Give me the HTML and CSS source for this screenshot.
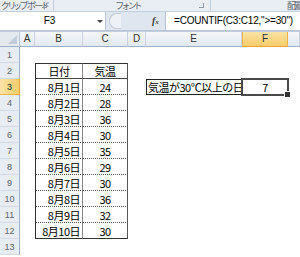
FILE: index.html
```html
<!DOCTYPE html>
<html lang="ja">
<head>
  <meta charset="UTF-8"/>
  <title>COUNTIF</title>
  <link rel="stylesheet" href="styles.css">
</head>
<body>
  <!-- リボンのグループ名 -->
  <div class="ribbon">
    <div class="grp clip"><span>クリップボード</span><i class="launch"></i></div>
    <div class="grp font"><span>フォント</span><i class="launch"></i></div>
    <div class="grp align"><span>配置</span></div>
  </div>

  <!-- 数式バー -->
  <div class="fbar">
    <div class="namebox">F3<i class="arrow"></i></div>
    <div class="grip"><i></i></div>
    <div class="fx"><i>f</i><small>x</small></div>
    <div class="formula">=COUNTIF(C3:C12,"&gt;=30")</div>
  </div>

  <!-- シート -->
  <div class="sheet">
    <div class="row head">
      <div class="corner"></div>
      <div class="ch a">A</div>
      <div class="ch b">B</div>
      <div class="ch c">C</div>
      <div class="ch d">D</div>
      <div class="ch e">E</div>
      <div class="ch f sel">F</div>
      <div class="ch g"></div>
    </div>
    <div class="row"><div class="rh">1</div></div>
    <div class="row">
      <div class="rh">2</div><div class="cell a"></div>
      <div class="cell b tb top mid">日付</div><div class="cell c tb top mid">気温</div>
    </div>
    <div class="row">
      <div class="rh sel">3</div><div class="cell a"></div>
      <div class="cell b tb">8月1日</div><div class="cell c tb">24</div>
      <div class="cell d"></div>
      <div class="cell e box">気温が30℃以上の日</div>
      <div class="cell f active">7</div>
    </div>
    <div class="row">
      <div class="rh">4</div><div class="cell a"></div>
      <div class="cell b tb">8月2日</div><div class="cell c tb">28</div>
    </div>
    <div class="row">
      <div class="rh">5</div><div class="cell a"></div>
      <div class="cell b tb">8月3日</div><div class="cell c tb">36</div>
    </div>
    <div class="row">
      <div class="rh">6</div><div class="cell a"></div>
      <div class="cell b tb">8月4日</div><div class="cell c tb">30</div>
    </div>
    <div class="row">
      <div class="rh">7</div><div class="cell a"></div>
      <div class="cell b tb">8月5日</div><div class="cell c tb">35</div>
    </div>
    <div class="row">
      <div class="rh">8</div><div class="cell a"></div>
      <div class="cell b tb">8月6日</div><div class="cell c tb">29</div>
    </div>
    <div class="row">
      <div class="rh">9</div><div class="cell a"></div>
      <div class="cell b tb">8月7日</div><div class="cell c tb">30</div>
    </div>
    <div class="row">
      <div class="rh">10</div><div class="cell a"></div>
      <div class="cell b tb">8月8日</div><div class="cell c tb">36</div>
    </div>
    <div class="row">
      <div class="rh">11</div><div class="cell a"></div>
      <div class="cell b tb">8月9日</div><div class="cell c tb">32</div>
    </div>
    <div class="row">
      <div class="rh">12</div><div class="cell a"></div>
      <div class="cell b tb last">8月10日</div><div class="cell c tb last">30</div>
    </div>
    <div class="row"><div class="rh">13</div></div>
  </div>
</body>
</html>
```

FILE: styles.css
```css
* { box-sizing: border-box; margin: 0; padding: 0; }

body {
  width: 300px;
  height: 257px;
  overflow: hidden;
  background: #fff;
  color: #000;
  font-family: "Noto Sans CJK JP", sans-serif;
}

/* リボン */
.ribbon {
  display: flex;
  height: 12px;
  background: #e9eef5;
  border-bottom: 1px solid #c3cedc;
  overflow: hidden;
}
.grp {
  position: relative;
  display: flex;
  align-items: center;
  height: 11px;
  border-right: 1px solid #c3cedc;
  font-size: 9px;
  line-height: 9px;
  color: #5b6370;
  font-feature-settings: "palt";
  letter-spacing: -1.2px;
}
.grp.clip { width: 54px; padding-left: 1px; }
.grp.font { width: 157px; padding-left: 62px; }
.grp.align { flex: 1; border-right: 0; padding-left: 76px; letter-spacing: -2.5px; }
.launch {
  position: absolute;
  right: 6px;
  top: 3px;
  width: 5px;
  height: 5px;
  border-right: 1px solid #8e99a8;
  border-bottom: 1px solid #8e99a8;
}

/* 数式バー */
.fbar {
  display: flex;
  height: 19px;
  background: #dfe6f0;
  border-bottom: 1px solid #b7c4d5;
}
.namebox {
  position: relative;
  width: 106px;
  background: #fff;
  border-right: 1px solid #b7c4d5;
  font: 10px "Liberation Sans", sans-serif;
  line-height: 18px;
  text-align: center;
  padding-right: 6px;
}
.arrow {
  position: absolute;
  right: 2px;
  top: 8px;
  border-left: 3px solid transparent;
  border-right: 3px solid transparent;
  border-top: 3px solid #444;
}
.grip {
  width: 42px;
  padding: 1px 0 0 3px;
}
.grip i {
  display: block;
  width: 12px;
  height: 16px;
  border: 1px solid #c2cad6;
  border-right: 0;
  border-radius: 8px 0 0 8px;
  background: #eef2f7;
}
.fx {
  width: 18px;
  border-right: 1px solid #b7c4d5;
  font: italic bold 10px "Liberation Serif", serif;
  color: #444;
  line-height: 18px;
  padding-left: 4px;
}
.fx small { font-size: 7px; }
.formula {
  flex: 1;
  background: #fff;
  font: 10px "Liberation Sans", sans-serif;
  line-height: 18px;
  padding-left: 8px;
  letter-spacing: -0.2px;
  white-space: nowrap;
}

/* シート */
.sheet { border-top: 1px solid #c3cedc; }
.row { display: flex; height: 16px; }
.row.head { height: 15px; }

.corner {
  position: relative;
  width: 20px;
  background: #e4e9f0;
  border-right: 1px solid #b9c5d4;
  border-bottom: 1px solid #9eb0c6;
}
.corner::after {
  content: "";
  position: absolute;
  right: 2px;
  bottom: 2px;
  border-left: 9px solid transparent;
  border-bottom: 9px solid #c3ccd8;
}
.ch {
  background: linear-gradient(#f4f6fa, #e3e9f1);
  border-right: 1px solid #c9d2de;
  border-bottom: 1px solid #9eb0c6;
  font: 10px "Liberation Sans", sans-serif;
  line-height: 14px;
  color: #333;
  text-align: center;
}
.ch.sel {
  background: linear-gradient(#fbe3a6, #f7cd6a);
  border-right-color: #f0b24a;
  border-left: 1px solid #f0b24a;
  border-bottom-color: #eba43a;
}
.rh {
  width: 20px;
  background: #e8edf4;
  border-right: 1px solid #9eb0c6;
  border-bottom: 1px solid #d2dae5;
  font: 9px "Liberation Sans", sans-serif;
  line-height: 16px;
  color: #5e6670;
  text-align: center;
}
.rh.sel {
  background: linear-gradient(90deg, #fbe3a6, #f7cd6a);
  border-right-color: #eba43a;
  border-bottom-color: #f0b24a;
  color: #333;
}

.a { width: 15px; }
.b { width: 48px; }
.c { width: 45px; }
.d { width: 18px; }
.e { width: 96px; }
.f { width: 46px; }
.g { flex: 1; }

.cell {
  font-size: 11px;
  line-height: 17px;
  letter-spacing: -0.5px;
  white-space: nowrap;
  padding: 0 2px;
}

/* 表の罫線 */
.tb {
  border-right: 1px solid #8a8a8a;
  border-bottom: 1px dotted #555;
}
.b.tb { border-left: 1px solid #333; text-align: right; }
.c.tb { border-right: 1px solid #555; text-align: center; }
.tb.top { border-top: 1px solid #333; border-bottom: 1px solid #444; line-height: 15px; }
.tb.mid { text-align: center; }
.tb.last { border-bottom: 1px solid #333; }

.box {
  border: 1px solid #222;
  padding-left: 1px;
  line-height: 15px;
}
.active {
  position: relative;
  text-align: center;
}
.active::before {
  content: "";
  position: absolute;
  inset: -1px;
  border: 2px solid #4a4a4a;
}
.active::after {
  content: "";
  position: absolute;
  right: -3px;
  bottom: -3px;
  width: 5px;
  height: 5px;
  background: #333;
  border: 1px solid #fff;
}
```
